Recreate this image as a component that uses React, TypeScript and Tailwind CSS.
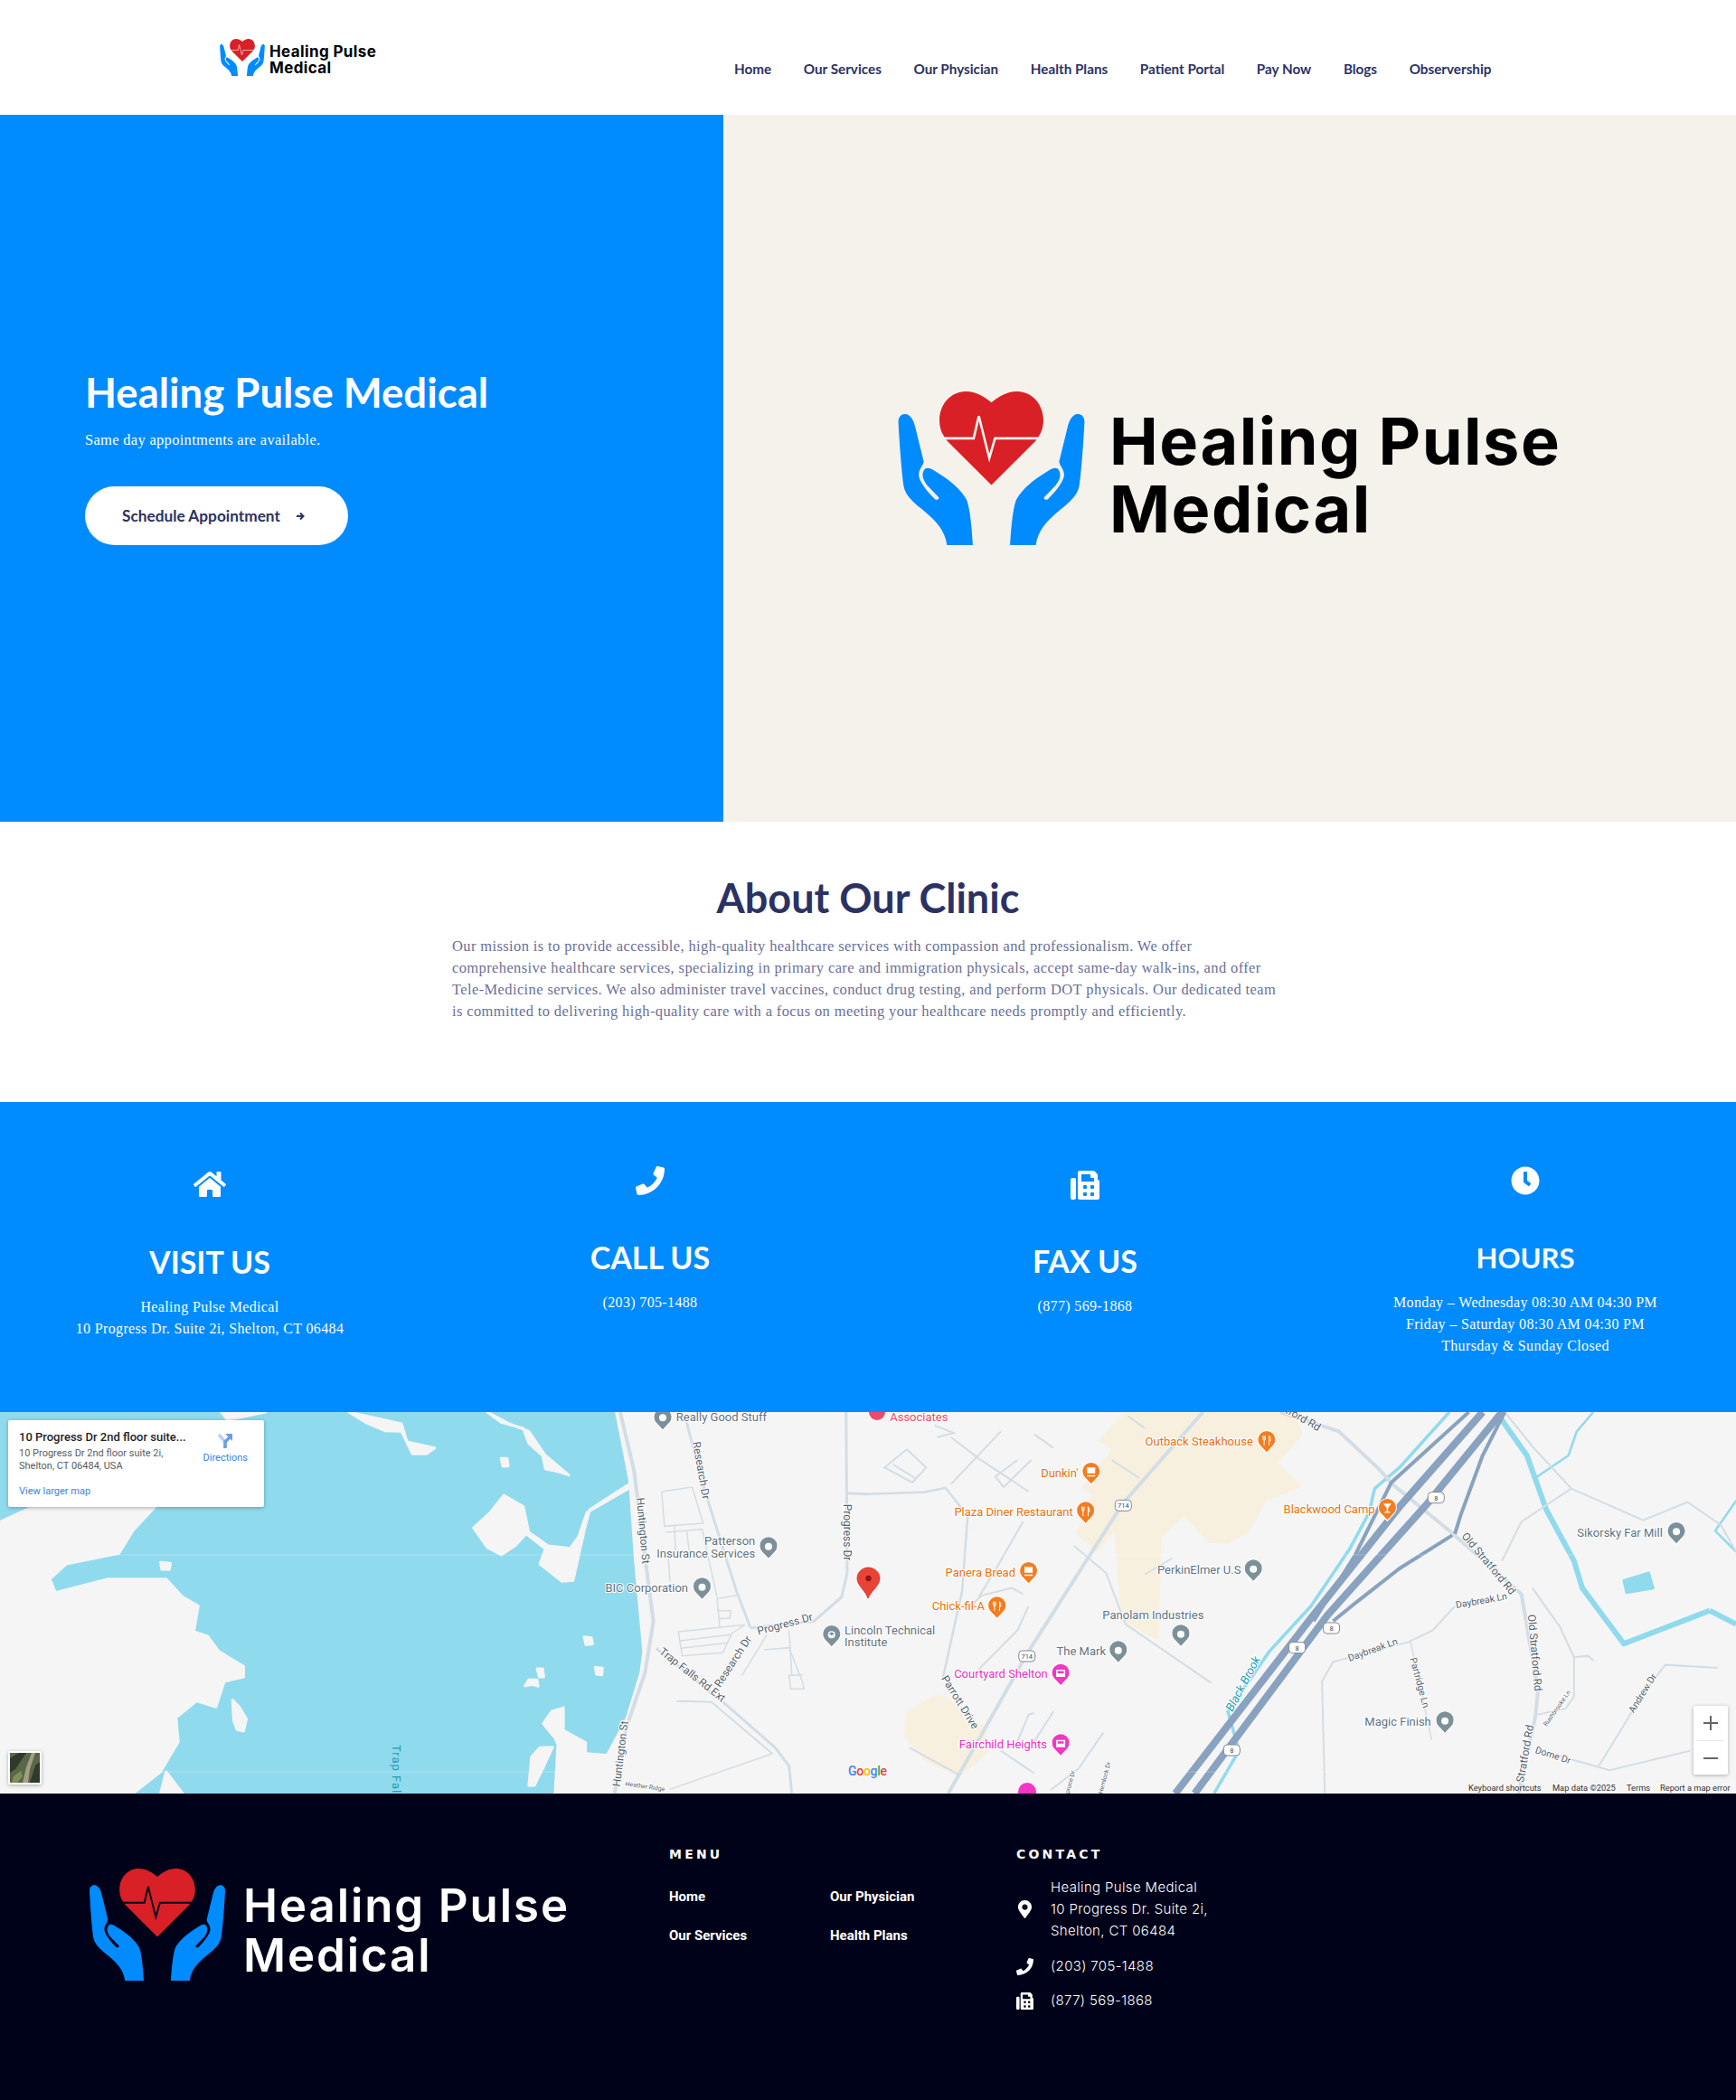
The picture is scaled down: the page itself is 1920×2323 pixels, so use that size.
import { FaClock, FaFax, FaHome, FaMapMarkerAlt, FaPhone } from 'react-icons/fa'

const navLinks = ['Home', 'Our Services', 'Our Physician', 'Health Plans', 'Patient Portal', 'Pay Now', 'Blogs', 'Observership']

const handPath =
  'M100 170C100 150 112 143 122 143C140 143 152 165 157 190L184 300C186 312 168 325 168 345C168 365 190 395 222 427C228 431 238 428 234 420L195 380C180 360 175 340 190 325C198 320 210 325 225 335C270 362 310 395 328 430C340 465 345 530 348 580H262C255 530 225 500 190 470C160 445 125 420 118 385C112 350 104 250 100 170Z'

const Logo = ({ pulse, className }: { pulse: string; className: string }) => (
  <svg viewBox="100 68 620 512" className={className}>
    <path
      d="M410 105C385 85 360 68 325 68C275 68 237 110 237 165C237 190 245 210 262 232L410 380L558 232C575 210 583 190 583 165C583 110 545 68 495 68C460 68 435 85 410 105Z"
      fill="#d92027"
    />
    <path d="M252 224H351L368 150L403 290L422 224H568" fill="none" stroke={pulse} strokeWidth="8" />
    <g fill="#008bff">
      <path d={handPath} />
      <path d={handPath} transform="translate(820 0) scale(-1 1)" />
    </g>
  </svg>
)

const land = [
  '0,370 60,320 280,320 240,400 215,475 120,510 90,560 100,605 195,560 300,560 330,620 358,650 350,735 375,750 395,800 440,850 440,885 405,900 390,985 355,965 318,1020 322,1100 290,1200 240,1272 0,1272',
  '300,1200 330,1272 290,1272',
  '1145,235 1065,330 1055,400 1035,565 1015,568 975,510 985,460 950,410 930,450 905,480 880,455 855,390 885,340 910,282 945,320 955,405 990,450 1030,458 1045,420 1060,340 1145,250',
  '630,6 725,45 735,105 785,125 770,145 745,145 725,70 695,68 660,40',
  '880,6 920,45 955,70 985,150 1027,215 1000,200 985,195 980,150 955,110 945,60 905,40',
  '400,6 480,6 430,25 410,30',
  '955,1245 960,1150 975,1120 998,1118 980,1190 965,1245',
  '290,505 308,508 306,528 292,528',
  '905,160 916,160 918,185 908,186',
  '1055,752 1068,755 1070,776 1058,778',
  '970,858 980,858 982,885 974,885',
  '948,915 955,895 970,895 972,916 960,910',
  '1075,853 1088,856 1087,878 1077,876',
  '420,962 432,985 445,1025 440,1065 428,1060 422,1030',
]

const water = '0,0 1110,0 1135,235 1145,500 1160,800 1155,870 1130,1020 1095,1140 1060,1135 1060,1100 1020,1060 1020,982 995,995 978,1040 1000,1090 1005,1110 1000,1272 0,1272'

const leftRoads: [string, number][] = [
  ['1120,6 1145,200 1170,560 1180,700 1165,870 1130,1060 1110,1272', 4],
  ['1240,40 1270,250 1330,600 1355,720', 3],
  ['1528,6 1530,540 1520,620 1470,700 1355,722', 3],
  ['1530,275 1568,278', 3],
  ['1185,790 1310,975 1400,1120 1425,1180 1430,1272', 3],
  ['1222,965 1285,968 1395,1140', 2],
  ['1395,1140 1300,1200 1210,1258', 1.5],
  ['1385,745 1340,880', 1.5],
  ['1380,795 1425,788 1450,905 1452,925 1428,925 1425,880 1450,878', 1.5],
  ['1425,730 1430,880', 1.5],
  ['1195,270 1250,255 1270,375 1200,385 1195,270', 1.5],
  ['1202,405 1268,395 1295,620', 1.5],
  ['1225,735 1345,712 1322,740 1305,805 1232,815 1225,735', 1.5],
  ['1228,765 1320,745', 1.5],
  ['1230,790 1315,772', 1.5],
  ['1300,720 1295,625 1330,615', 1.5],
  ['1295,665 1320,665 1318,690 1298,692', 1.5],
  ['1218,385 1220,470', 1.5],
  ['1240,400 1245,470', 1.5],
  ['1207,490 1210,570', 1.5],
]

const rightRoads: [string, number][] = [
  ['0,278 100,272 140,258 180,350 170,600 135,890', 2.5],
  ['605,6 460,310 290,800 145,1272', 4],
  ['745,6 850,70 920,190 950,250 1050,400 1180,610 1210,930 1205,1020 1175,1272', 4],
  ['150,90 200,160 290,270', 2],
  ['300,80 335,125', 2],
  ['240,70 150,245', 2],
  ['295,165 245,255 230,220 270,165', 2],
  ['70,130 105,190 80,240 30,190 70,130', 2],
  ['45,180 85,225', 2],
  ['120,50 155,75 125,90', 2],
  ['470,20 500,60', 2],
  ['440,165 490,225', 2],
  ['280,370 230,530 200,620', 2],
  ['280,610 260,590 205,615 180,660', 2],
  ['290,650 270,730 200,860', 2],
  ['372,450 430,540 465,710 620,905', 2],
  ['270,1100 290,1010 300,1005', 2],
  ['335,1000 300,1100', 2],
  ['425,1070 380,1190 330,1260', 2],
  ['75,1120 165,1210', 2],
  ['240,1130 300,1205', 2],
  ['1060,650 1020,730 975,770 840,835 820,900 825,1272', 2],
  ['980,770 1018,1095', 1.5],
  ['1140,630 1060,640', 1.5],
  ['1200,590 1250,720 1275,820 1275,950 1260,990 1210,1010', 2],
  ['1275,820 1300,815 1310,830', 2],
  ['1205,1125 1340,1195 1485,1130', 2],
  ['1320,1180 1400,940 1440,845 1535,855', 2],
  ['1145,500 1180,370 1270,260 1200,120 1150,6', 2],
  ['1270,260 1400,365 1480,305 1540,380 1568,470', 2],
  ['500,545 550,490', 1.5],
]

const highways: [string, number][] = [
  ['1145,6 1010,310 830,680 590,1272', 8],
  ['1110,6 960,320 800,690 555,1272', 8],
  ['1085,6 945,240 880,480 805,700', 4],
  ['1150,6 1110,150 1070,350 1060,410', 4],
  ['1055,415 960,525 880,640 840,700', 4],
]

type PinKind = 'gray' | 'school' | 'pink' | 'cup' | 'fork' | 'bar'

const Pin = ({ x, y, kind }: { x: number; y: number; kind: PinKind }) => {
  const color = kind === 'gray' || kind === 'school' ? '#7b9099' : kind === 'pink' ? '#f336c4' : '#f57c1f'
  return (
    <g transform={`translate(${x} ${y})`}>
      <path d="M0 15L-8.5 5.5A10.5 10.5 0 1 1 8.5 5.5Z" fill="#fff" />
      <path d="M0 13L-7.5 5A9.5 9.5 0 1 1 7.5 5Z" fill={color} />
      {(kind === 'gray' || kind === 'school') && <circle r="4" fill="#fff" />}
      {kind === 'school' && <path d="M-3 -1L0 -3L3 -1L0 1Z" fill="#7b9099" />}
      {kind === 'fork' && (
        <path d="M-4 -5V-1.5Q-4 0 -2.8 0Q-1.6 0 -1.6 -1.5V-5M-2.8 -5V5.5M2.8 5.5V-5Q4.5 -3.5 4.2 0.5H2.8" stroke="#fff" strokeWidth="1" fill="none" />
      )}
      {kind === 'cup' && <path d="M-4.5 -5H4.5V1.5H-4.5ZM-4.5 3.5H4.5V5H-4.5Z" fill="#fff" />}
      {kind === 'bar' && <path d="M-4.5 -5H4.5L0.8 0V4H3V5.2H-3V4H-0.8V0Z" fill="#fff" />}
      {kind === 'pink' && <path d="M-5 -4H5V4H-5Z M-3.5 -2.5V0H3.5V-2.5Z" fill="#fff" fillRule="evenodd" />}
    </g>
  )
}

type Label = [string, number, number, string, number?, number?]
const GRAY = '#5f7282'
const ORANGE = '#e8710a'
const PINK = '#e92ec0'
const ROAD = '#53606b'

const leftLabels: Label[] = [
  ['Really Good Stuff', 1303, 27, GRAY],
  ['Patterson', 1318, 438, GRAY],
  ['Insurance Services', 1275, 478, GRAY],
  ['BIC Corporation', 1168, 593, GRAY],
  ['Huntington St', 1160, 400, ROAD, 12, 85],
  ['Huntington St', 1122, 1140, ROAD, 12, -83],
  ['Research Dr', 1265, 200, ROAD, 12, 80],
  ['Progress Dr', 1528, 405, ROAD, 12, 90],
  ['Progress Dr', 1418, 712, ROAD, 12, -15],
  ['Trap Falls Rd Ext', 1250, 880, ROAD, 12, 38],
  ['Research Dr', 1325, 835, ROAD, 12, -57],
  ['Heather Ridge', 1165, 1250, ROAD, 7, 8],
]

const rightLabels: Label[] = [
  ['Associates', 92, 25, '#ea4c6a'],
  ['Outback Steakhouse', 598, 108, ORANGE],
  ["Dunkin'", 346, 212, ORANGE],
  ['Plaza Diner Restaurant', 263, 342, ORANGE],
  ['Blackwood Camp', 833, 333, ORANGE],
  ['Panera Bread', 203, 541, ORANGE],
  ['Chick-fil-A', 163, 654, ORANGE],
  ['PerkinElmer U.S', 598, 533, GRAY],
  ['Panolam Industries', 515, 682, GRAY],
  ['The Mark', 385, 802, GRAY],
  ['Courtyard Shelton', 240, 879, PINK],
  ['Fairchild Heights', 244, 1112, PINK],
  ['Sikorsky Far Mill', 1358, 410, GRAY],
  ['Magic Finish', 957, 1037, GRAY],
  ['Daybreak Ln', 1108, 634, ROAD, 10.5, -10],
  ['Daybreak Ln', 912, 797, ROAD, 10.5, -20],
  ['Partridge Ln', 995, 905, ROAD, 10.5, 75],
  ['Old Stratford Rd', 1120, 510, ROAD, 12, 50],
  ['Old Stratford Rd', 1203, 805, ROAD, 12, 85],
  ['Stratford Rd', 1188, 1140, ROAD, 12, -80],
  ['tford Rd', 785, 30, ROAD, 12, 30],
  ['Dome Dr', 1237, 1147, ROAD, 10.5, 18],
  ['Andrew Dr', 1400, 940, ROAD, 10.5, -58],
  ['Parrott Drive', 165, 970, ROAD, 12, 58],
  ['Rushbrooke Ln', 1245, 990, ROAD, 7, -55],
  ['Spruce Dr', 365, 1240, ROAD, 7, -75],
  ['Hemlock Dr', 428, 1220, ROAD, 7, -75],
]

const pins: [number, number, PinKind][] = [
  [1197, 25, 'gray'],
  [1388, 452, 'gray'],
  [1268, 587, 'gray'],
  [1502, 745, 'school'],
  [960 * 1.633 + 720, 100, 'fork'],
  [960 * 1.633 + 403, 205, 'cup'],
  [960 * 1.633 + 393, 335, 'fork'],
  [960 * 1.633 + 938, 325, 'bar'],
  [960 * 1.633 + 290, 535, 'cup'],
  [960 * 1.633 + 233, 650, 'fork'],
  [960 * 1.633 + 696, 527, 'gray'],
  [960 * 1.633 + 565, 743, 'gray'],
  [960 * 1.633 + 452, 797, 'gray'],
  [960 * 1.633 + 348, 873, 'pink'],
  [960 * 1.633 + 348, 1106, 'pink'],
  [960 * 1.633 + 1460, 403, 'gray'],
  [960 * 1.633 + 1042, 1031, 'gray'],
]

const shields: [string, number, number][] = [
  ['714', 461, 316],
  ['714', 287, 816],
  ['8', 1026, 290],
  ['8', 837, 723],
  ['8', 775, 788],
  ['8', 657, 1128],
]

const MapLabel = ({ label, offset }: { label: Label; offset: number }) => {
  const [text, zx, zy, color, size = 13, rot = 0] = label
  const x = offset + zx / 1.633
  const y = zy / 3 - 2
  return (
    <text
      x={x}
      y={y}
      fill={color}
      fontSize={size}
      textAnchor="middle"
      dominantBaseline="middle"
      stroke="#fff"
      strokeWidth="2"
      paintOrder="stroke"
      transform={rot ? `rotate(${rot} ${x} ${y})` : undefined}
    >
      {text}
    </text>
  )
}

const MapDrawing = () => (
  <svg viewBox="0 0 1920 422" className="block h-full w-full font-['Roboto',sans-serif]">
    <rect width="1920" height="422" fill="#f5f5f5" />
    <g transform="translate(0 -2) scale(0.6124 0.3333)">
      <polygon points={water} fill="#90daee" />
      {land.map((p) => (
        <polygon key={p} points={p} fill="#f5f5f5" stroke="#f5f5f5" strokeWidth="3" strokeLinejoin="round" vectorEffect="non-scaling-stroke" />
      ))}
      {leftRoads.map(([p, w]) => (
        <polyline key={p} points={p} fill="none" stroke="#d3dde5" strokeWidth={w} vectorEffect="non-scaling-stroke" />
      ))}
    </g>
    <g transform="translate(960 -2) scale(0.6124 0.3333)">
      <polygon
        points="465,6 415,100 440,130 385,260 405,280 375,410 415,470 445,400 455,640 460,700 525,765 530,420 570,350 615,440 650,445 690,400 720,300 785,255 740,175 785,80 770,6"
        fill="#f7f0df"
      />
      <polygon points="120,945 70,1000 65,1080 100,1160 165,1220 220,1130 210,1050 140,950" fill="#f7f0df" />
      <polyline points="1050,6 960,190 915,260 905,340 870,460 800,650 725,800 650,1000 670,1130 625,1272" fill="none" stroke="#90daee" strokeWidth="3.5" vectorEffect="non-scaling-stroke" />
      <polyline points="1140,20 1190,150 1225,330 1275,500 1290,590 1365,775 1520,665" fill="none" stroke="#90daee" strokeWidth="6" strokeLinejoin="round" vectorEffect="non-scaling-stroke" />
      <polyline points="1310,6 1280,70 1265,150 1205,225" fill="none" stroke="#90daee" strokeWidth="2.5" vectorEffect="non-scaling-stroke" />
      <polyline points="1520,665 1568,710" fill="none" stroke="#90daee" strokeWidth="6" vectorEffect="non-scaling-stroke" />
      <polyline points="1568,300 1530,400 1568,470" fill="none" stroke="#90daee" strokeWidth="2.5" vectorEffect="non-scaling-stroke" />
      <polygon points="1365,565 1410,540 1418,590 1370,605" fill="#90daee" stroke="#90daee" strokeWidth="3" strokeLinejoin="round" vectorEffect="non-scaling-stroke" />
      {rightRoads.map(([p, w]) => (
        <polyline key={p} points={p} fill="none" stroke="#d3dde5" strokeWidth={w} vectorEffect="non-scaling-stroke" />
      ))}
      {highways.map(([p, w]) => (
        <polyline key={p} points={p} fill="none" stroke="#88a2bf" strokeWidth={w} vectorEffect="non-scaling-stroke" />
      ))}
    </g>
    <path d="M0 158H1920M0 398H1920" stroke="#fff" strokeOpacity="0.25" />
    {leftLabels.map((l, i) => (
      <MapLabel key={i} label={l} offset={0} />
    ))}
    {rightLabels.map((l, i) => (
      <MapLabel key={i} label={l} offset={960} />
    ))}
    <text x="934" y="246" fontSize="13" fill={GRAY} stroke="#fff" strokeWidth="2" paintOrder="stroke">Lincoln Technical</text>
    <text x="934" y="259" fontSize="13" fill={GRAY} stroke="#fff" strokeWidth="2" paintOrder="stroke">Institute</text>
    <text transform="translate(434 368) rotate(90)" fontSize="13" letterSpacing="1" fill="#1c9db3">Trap Falls</text>
    <text transform="translate(1363 332) rotate(-62)" fontSize="13" fontStyle="italic" fill="#1c9db3" stroke="#fff" strokeWidth="2" paintOrder="stroke">Black Brook</text>
    {pins.map(([x, y, kind], i) => (
      <Pin key={i} x={x / 1.633} y={y / 3 - 2} kind={kind} />
    ))}
    <circle cx="1136" cy="420" r="10" fill="#f336c4" />
    <circle cx="970" cy="0" r="9" fill="#ea4c6a" />
    {shields.map(([t, zx, zy], i) => {
      const x = 960 + zx / 1.633
      const y = zy / 3 - 2
      return (
        <g key={i}>
          <rect x={x - 9} y={y - 6} width="18" height="12" rx="4" fill="#fff" stroke="#7f8a93" />
          <text x={x} y={y + 3} fontSize="7.5" textAnchor="middle" fill="#3d4750">{t}</text>
        </g>
      )
    })}
    <path d="M948 184C948 177 954 172 960 172C967 172 973 177 973 184C973 192 964 197 960 206C957 197 948 192 948 184Z" fill="#ea4335" stroke="#c5221f" strokeWidth="0.7" />
    <circle cx="960.5" cy="184" r="3.2" fill="#8f1512" />
    <text x="938" y="402" fontSize="14" fontWeight="500" letterSpacing="-0.3">
      <tspan fill="#4285f4">G</tspan>
      <tspan fill="#ea4335">o</tspan>
      <tspan fill="#fbbc05">o</tspan>
      <tspan fill="#4285f4">g</tspan>
      <tspan fill="#34a853">l</tspan>
      <tspan fill="#ea4335">e</tspan>
    </text>
    <g fontSize="9.3" fill="#333">
      <text x="1624" y="419">Keyboard shortcuts</text>
      <text x="1717" y="419">Map data ©2025</text>
      <text x="1799" y="419">Terms</text>
      <text x="1836" y="419">Report a map error</text>
    </g>
  </svg>
)

const MapSection = () => (
  <section className="relative h-[422px] overflow-hidden">
    <MapDrawing />
    <div className="absolute left-[9px] top-[9px] flex h-[96px] w-[283px] justify-between rounded-[2px] bg-white pl-[12px] pr-[18px] pt-[9px] font-['Roboto',sans-serif] shadow-[0_1px_4px_rgba(0,0,0,0.3)]">
      <div>
        <p className="text-[13px] font-medium leading-[20px] text-[#1f1f1f]">10 Progress Dr 2nd floor suite...</p>
        <p className="mt-[1px] text-[11px] leading-[14px] text-[#5b5b5b]">
          10 Progress Dr 2nd floor suite 2i,
          <br />
          Shelton, CT 06484, USA
        </p>
        <p className="mt-[14px] text-[11px] leading-[14px] text-[#3a84df]">View larger map</p>
      </div>
      <div className="flex flex-col items-center pt-[5px]">
        <svg viewBox="0 0 18 18" className="h-[18px] w-[18px]">
          <path d="M2 2L9 10V17" fill="none" stroke="#b7d0f3" strokeWidth="3.5" />
          <path d="M9 17V10L15 4" fill="none" stroke="#6a9de8" strokeWidth="3.5" />
          <path d="M9 1H17V9Z" fill="#6a9de8" />
        </svg>
        <span className="mt-[3px] text-[11px] leading-[14px] text-[#3a84df]">Directions</span>
      </div>
    </div>
    <div className="absolute left-[9px] top-[375px] h-[37px] w-[37px] overflow-hidden rounded-[2px] border-2 border-white shadow-[0_1px_4px_rgba(0,0,0,0.3)]">
      <svg viewBox="0 0 33 33" className="h-full w-full">
        <rect width="33" height="33" fill="#5a6648" />
        <path d="M0 6L10 0H18L6 18L0 22ZM22 33L28 14L33 10V33Z" fill="#2f3a2a" />
        <path d="M14 33L18 16L24 0H28L22 18L20 33Z" fill="#a39f85" />
        <path d="M4 26L12 20L14 26L8 33H2Z" fill="#7f8f55" />
      </svg>
    </div>
    <div className="absolute left-[1873px] top-[325px] flex h-[76px] w-[38px] flex-col items-center rounded-[2px] bg-white shadow-[0_1px_4px_rgba(0,0,0,0.3)]">
      <span className="flex h-[38px] items-center">
        <svg viewBox="0 0 18 18" className="h-[18px] w-[18px]">
          <path d="M9 1V17M1 9H17" stroke="#666" strokeWidth="2" />
        </svg>
      </span>
      <span className="h-px w-[30px] bg-[#e6e6e6]" />
      <span className="flex h-[37px] items-center">
        <svg viewBox="0 0 18 18" className="h-[18px] w-[18px]">
          <path d="M1 9H17" stroke="#666" strokeWidth="2" />
        </svg>
      </span>
    </div>
  </section>
)

const InfoColumn = ({
  icon,
  title,
  lines,
  className,
  titleClass,
}: {
  icon: React.ReactNode
  title: string
  lines: string[]
  className: string
  titleClass: string
}) => (
  <div className={`flex flex-col items-center text-center text-white ${className}`}>
    {icon}
    <h3 className={`font-['Lato',sans-serif] font-bold leading-[40px] ${titleClass}`}>{title}</h3>
    <div className="mt-[18px] font-['Liberation_Serif',serif] text-[16px] leading-[24px] tracking-[0.35px]">
      {lines.map((line) => (
        <p key={line}>{line}</p>
      ))}
    </div>
  </div>
)

const App = () => {
  return (
    <div className="min-h-[2323px] w-[1920px] overflow-hidden bg-white">
      <header className="flex h-[127px] bg-white">
        <div className="flex w-[812px] items-start pl-[243px] pt-[43px]">
          <Logo pulse="#f5f2eb" className="h-[41px] w-[50px]" />
          <div className="ml-[5px] mt-[5px] font-['Inter',sans-serif] text-[17px] font-bold leading-[18px] tracking-[0.38px] text-black">
            Healing Pulse
            <br />
            Medical
          </div>
        </div>
        <nav className="mt-[65px] flex h-[22px] gap-[35.6px] font-['Lato',sans-serif] text-[15.25px] font-bold leading-[22px] text-[#2b3263]">
          {navLinks.map((link) => (
            <a key={link}>{link}</a>
          ))}
        </nav>
      </header>

      <section className="flex h-[782px]">
        <div className="flex w-[800px] flex-col justify-center bg-[#008bff] pb-[27px] pl-[94px] text-white">
          <h1 className="font-['Lato',sans-serif] text-[45.5px] font-bold leading-[56px]">Healing Pulse Medical</h1>
          <p className="mt-[13px] font-['Liberation_Serif',serif] text-[16.5px] leading-[24px] tracking-[0.3px]">
            Same day appointments are available.
          </p>
          <button className="mt-[39px] flex h-[65px] w-[291px] items-center rounded-full bg-white pl-[41px] font-['Lato',sans-serif] text-[17.25px] font-bold text-[#2b3263]">
            Schedule Appointment
            <svg viewBox="0 0 10 10" className="ml-[17px] h-[10px] w-[10px]">
              <path d="M1 5H8M5 1.5L8.5 5L5 8.5" fill="none" stroke="#2b3263" strokeWidth="2" />
            </svg>
          </button>
        </div>
        <div className="flex flex-1 items-start bg-[#f5f2eb] pl-[193px] pt-[306px]">
          <Logo pulse="#f5f2eb" className="h-[170px] w-[207px]" />
          <div className="ml-[27px] mt-[17px] font-['Inter',sans-serif] text-[72px] font-bold leading-[75px] tracking-[1.5px] text-black">
            Healing Pulse
            <br />
            Medical
          </div>
        </div>
      </section>

      <section className="h-[310px] pt-[57px]">
        <h2 className="text-center font-['Lato',sans-serif] text-[45px] font-bold leading-[54px] text-[#2b3263]">About Our Clinic</h2>
        <p className="ml-[500px] mt-[15px] w-[930px] font-['Liberation_Serif',serif] text-[16.5px] leading-[24px] tracking-[0.38px] text-[#6b7096]">
          Our mission is to provide accessible, high-quality healthcare services with compassion and professionalism. We offer
          <br />
          comprehensive healthcare services, specializing in primary care and immigration physicals, accept same-day walk-ins, and offer
          <br />
          Tele-Medicine services. We also administer travel vaccines, conduct drug testing, and perform DOT physicals. Our dedicated team
          <br />
          is committed to delivering high-quality care with a focus on meeting your healthcare needs promptly and efficiently.
        </p>
      </section>

      <section className="grid h-[343px] grid-cols-[464px_510px_452px_494px] bg-[#008bff]">
        <InfoColumn
          className="pt-[75px]"
          titleClass="mt-[50px] text-[34px]"
          icon={<FaHome className="h-[32px] w-[36px]" />}
          title="VISIT US"
          lines={['Healing Pulse Medical', '10 Progress Dr. Suite 2i, Shelton, CT 06484']}
        />
        <InfoColumn
          className="pt-[71px]"
          titleClass="mt-[49px] text-[34px]"
          icon={<FaPhone className="h-[32px] w-[32px]" />}
          title="CALL US"
          lines={['(203) 705-1488']}
        />
        <InfoColumn
          className="pt-[76px]"
          titleClass="mt-[48px] text-[34px]"
          icon={<FaFax className="h-[32px] w-[32px]" />}
          title="FAX US"
          lines={['(877) 569-1868']}
        />
        <InfoColumn
          className="pl-[28px] pt-[71px]"
          titleClass="mt-[49px] text-[31px]"
          icon={<FaClock className="h-[32px] w-[32px]" />}
          title="HOURS"
          lines={['Monday – Wednesday 08:30 AM 04:30 PM', 'Friday – Saturday 08:30 AM 04:30 PM', 'Thursday & Sunday Closed']}
        />
      </section>

      <MapSection />

      <footer className="flex h-[339px] bg-[#00021a] text-white">
        <div className="flex w-[740px] items-start pl-[99px] pt-[83px]">
          <Logo pulse="#00021a" className="h-[124px] w-[150px]" />
          <div className="ml-[20px] mt-[13px] font-['Inter',sans-serif] text-[51px] font-semibold leading-[55px] tracking-[1.9px]">
            Healing Pulse
            <br />
            Medical
          </div>
        </div>
        <div className="w-[384px] pt-[57px]">
          <h4 className="font-['DejaVu_Sans',sans-serif] text-[14px] font-bold uppercase leading-[20px] tracking-[3.2px]">Menu</h4>
          <div className="mt-[26px] grid grid-cols-[178px_1fr] gap-y-[21px] font-['Roboto',sans-serif] text-[15px] font-bold leading-[22px]">
            <a>Home</a>
            <a>Our Physician</a>
            <a>Our Services</a>
            <a>Health Plans</a>
          </div>
        </div>
        <div className="pt-[57px]">
          <h4 className="font-['DejaVu_Sans',sans-serif] text-[14px] font-bold uppercase leading-[20px] tracking-[3.2px]">Contact</h4>
          <div className="mt-[15px] font-['Inter',sans-serif] text-[15px] font-light leading-[24px] tracking-[0.35px]">
            <div className="flex items-center">
              <span className="flex w-[38px] pl-[2px]">
                <FaMapMarkerAlt className="h-[20px] w-[15px]" />
              </span>
              <p>
                Healing Pulse Medical
                <br />
                10 Progress Dr. Suite 2i,
                <br />
                Shelton, CT 06484
              </p>
            </div>
            <div className="mt-[15px] flex items-center">
              <span className="flex w-[38px]">
                <FaPhone className="h-[19px] w-[19px]" />
              </span>
              <p>(203) 705-1488</p>
            </div>
            <div className="mt-[14px] flex items-center">
              <span className="flex w-[38px]">
                <FaFax className="h-[19px] w-[19px]" />
              </span>
              <p>(877) 569-1868</p>
            </div>
          </div>
        </div>
      </footer>
    </div>
  )
}

export default App
